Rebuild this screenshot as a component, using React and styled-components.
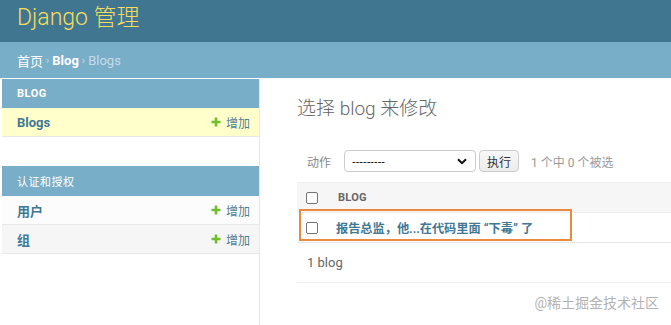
import React from "react";
import styled, { createGlobalStyle } from "styled-components";

const Global = createGlobalStyle`
  html, body { margin: 0; padding: 0; background: #fff; }
  body {
    font-family: Roboto, "Noto Sans CJK SC", "Noto Sans", sans-serif;
    color: #333;
    width: 671px;
    height: 325px;
    overflow: hidden;
  }
`;

const Page = styled.div`
  position: relative;
  display: flex;
  flex-direction: column;
  height: 325px;
`;

const Header = styled.header`
  height: 42px;
  box-sizing: border-box;
  padding: 4px 17px 0;
  background: #417690;
`;

const Branding = styled.h1`
  margin: 0;
  font-size: 23px;
  line-height: 28px;
  font-weight: 300;
  color: #f5dd5d;
`;

const Breadcrumbs = styled.div`
  height: 36px;
  box-sizing: border-box;
  padding: 0 17px;
  display: flex;
  align-items: center;
  gap: 3px;
  background: #79aec8;
  color: #c4dce8;
  font-size: 13px;
`;

const Crumb = styled.span`
  color: ${(p) => (p.$current ? "#c4dce8" : "#fff")};
  font-weight: ${(p) => (p.$bold ? 700 : 400)};
`;

const Sep = styled.span`
  color: #c4dce8;
  font-size: 11px;
`;

const Body = styled.div`
  flex: 1;
  display: flex;
  min-height: 0;
`;

const Sidebar = styled.nav`
  width: 260px;
  flex: none;
  box-sizing: border-box;
  padding: 1px 0 0 2px;
  border-right: 1px solid #e8e8e8;
  display: flex;
  flex-direction: column;
  gap: 29px;
`;

const Module = styled.div`
  display: flex;
  flex-direction: column;
`;

const Caption = styled.div`
  height: ${(p) => p.$h || 29}px;
  box-sizing: border-box;
  padding-left: 15px;
  display: flex;
  align-items: center;
  background: #79aec8;
  color: #fff;
  font-size: 11px;
  letter-spacing: 0.5px;
  font-weight: ${(p) => (p.$light ? 400 : 700)};
  text-transform: uppercase;
`;

const Row = styled.div`
  height: 29px;
  box-sizing: border-box;
  padding: 0 9px 0 15px;
  display: flex;
  align-items: center;
  justify-content: space-between;
  background: ${(p) => p.$bg || "#fff"};
  border-bottom: 1px solid #e8e8e8;
`;

const ModelLink = styled.span`
  color: #417893;
  font-weight: 700;
  font-size: 13px;
`;

const AddLink = styled.span`
  display: flex;
  align-items: center;
  gap: 5px;
  color: #4f7f98;
  font-size: 12px;
`;

const Plus = () => (
  <svg width="10" height="10" viewBox="0 0 10 10">
    <path d="M5 0.5v9M0.5 5h9" stroke="#70bf2b" strokeWidth="2.6" />
  </svg>
);

const Main = styled.main`
  flex: 1;
  min-width: 0;
  padding: 18px 0 0 37px;
  display: flex;
  flex-direction: column;
`;

const Title = styled.h1`
  margin: 0;
  font-size: 19px;
  line-height: 26px;
  font-weight: 300;
  color: #666;
`;

const Actions = styled.div`
  margin-top: 28px;
  padding-left: 10px;
  height: 22px;
  display: flex;
  align-items: center;
  font-size: 12px;
  color: #888;
`;

const Label = styled.span`
  margin-right: 13px;
`;

const Select = styled.div`
  width: 132px;
  height: 22px;
  box-sizing: border-box;
  border: 1px solid #ccc;
  border-radius: 4px;
  background: #fff;
  display: flex;
  align-items: center;
  justify-content: space-between;
  padding: 0 8px 0 7px;
  color: #000;
  font-size: 11px;
  font-family: "Liberation Sans", Arial, sans-serif;
`;

const Go = styled.button`
  margin-left: 3px;
  height: 22px;
  width: 40px;
  padding: 0;
  box-sizing: border-box;
  border: 1px solid #ccc;
  border-radius: 4px;
  background: linear-gradient(#f8f8f8, #ececec);
  color: #333;
  font-size: 12px;
  font-family: inherit;
`;

const Counter = styled.span`
  margin-left: 12px;
  color: #999;
`;

const Table = styled.div`
  position: relative;
  margin-top: 10px;
  display: flex;
  flex-direction: column;
`;

const HeadRow = styled.div`
  height: 31px;
  box-sizing: border-box;
  display: flex;
  align-items: center;
  padding-left: 9px;
  background: #f6f6f6;
  border-top: 1px solid #eee;
  border-bottom: 1px solid #eee;
`;

const BodyRow = styled.div`
  height: 30px;
  box-sizing: border-box;
  display: flex;
  align-items: center;
  padding-left: 9px;
  border-bottom: 1px solid #e4e4e4;
`;

const Check = styled.span`
  width: 10px;
  height: 10px;
  flex: none;
  border: 1px solid #767676;
  border-radius: 2px;
  background: #fff;
  margin-right: ${(p) => p.$gap || 20}px;
`;

const HeadText = styled.span`
  font-size: 11px;
  font-weight: 700;
  color: #666;
  letter-spacing: 0.3px;
`;

const RowLink = styled.span`
  font-size: 12.2px;
  font-weight: 700;
  color: #417893;
`;

const Highlight = styled.div`
  position: absolute;
  left: 2px;
  top: 27px;
  width: 273px;
  height: 32px;
  box-sizing: border-box;
  border: 2px solid #ea8a3f;
  pointer-events: none;
`;

const Paginator = styled.div`
  height: 40px;
  box-sizing: border-box;
  padding-left: 10px;
  display: flex;
  align-items: center;
  font-size: 13px;
  color: #666;
  border-bottom: 1px solid #eee;
`;

const Watermark = styled.div`
  position: absolute;
  right: 12px;
  bottom: 13px;
  font-size: 14px;
  color: #b3b3b3;
`;

const Chevron = () => (
  <svg width="10" height="7" viewBox="0 0 10 7">
    <path d="M1 1.2l4 4 4-4" fill="none" stroke="#111" strokeWidth="2" />
  </svg>
);

export default function App() {
  return (
    <Page>
      <Global />
      <Header>
        <Branding>Django 管理</Branding>
      </Header>
      <Breadcrumbs>
        <Crumb>首页</Crumb>
        <Sep>›</Sep>
        <Crumb $bold>Blog</Crumb>
        <Sep>›</Sep>
        <Crumb $current>Blogs</Crumb>
      </Breadcrumbs>
      <Body>
        <Sidebar>
          <Module>
            <Caption>Blog</Caption>
            <Row $bg="#ffffcc">
              <ModelLink>Blogs</ModelLink>
              <AddLink>
                <Plus />
                增加
              </AddLink>
            </Row>
          </Module>
          <Module>
            <Caption $light $h={30}>认证和授权</Caption>
            <Row $bg="#fcfcfc">
              <ModelLink>用户</ModelLink>
              <AddLink>
                <Plus />
                增加
              </AddLink>
            </Row>
            <Row $bg="#f6f6f6">
              <ModelLink>组</ModelLink>
              <AddLink>
                <Plus />
                增加
              </AddLink>
            </Row>
          </Module>
        </Sidebar>
        <Main>
          <Title>选择 blog 来修改</Title>
          <Actions>
            <Label>动作</Label>
            <Select>
              <span>---------</span>
              <Chevron />
            </Select>
            <Go>执行</Go>
            <Counter>1 个中 0 个被选</Counter>
          </Actions>
          <Table>
            <HeadRow>
              <Check />
              <HeadText>BLOG</HeadText>
            </HeadRow>
            <BodyRow>
              <Check $gap={18} />
              <RowLink>报告总监，他...在代码里面 “下毒” 了</RowLink>
            </BodyRow>
            <Paginator>1 blog</Paginator>
            <Highlight />
          </Table>
        </Main>
      </Body>
      <Watermark>@稀土掘金技术社区</Watermark>
    </Page>
  );
}
